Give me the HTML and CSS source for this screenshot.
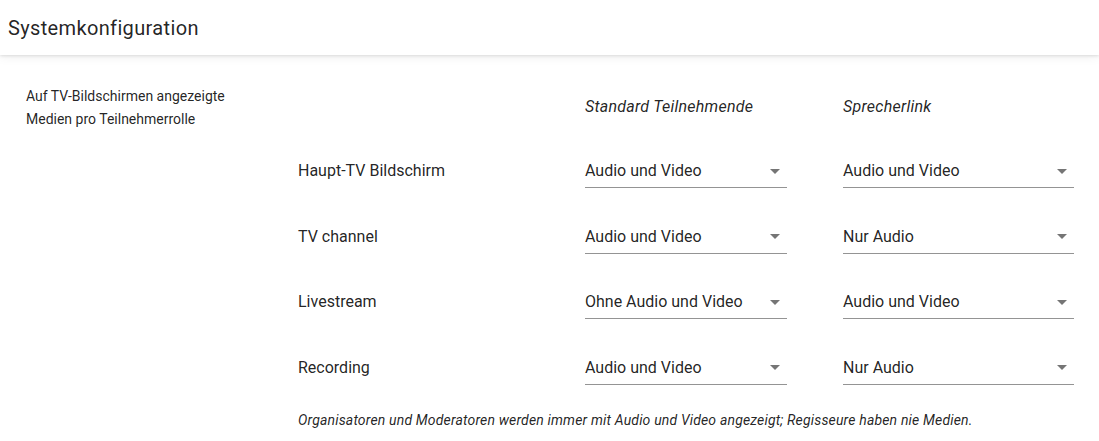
FILE: index.html
```html
<!DOCTYPE html>
<html>
<head>
  <meta charset="utf-8">
  <link rel="stylesheet" href="styles.css">
</head>
<body>
  <div class="toolbar">
    <h1>Systemkonfiguration</h1>
  </div>

  <div class="content">
    <div class="section-label">
      Auf TV-Bildschirmen angezeigte<br>Medien pro Teilnehmerrolle
    </div>

    <div class="media-grid">
      <div class="col-head"></div>
      <div class="col-head">Standard Teilnehmende</div>
      <div class="col-head">Sprecherlink</div>

      <div class="row-label">Haupt-TV Bildschirm</div>
      <div class="select narrow"><span>Audio und Video</span><i class="arrow"></i></div>
      <div class="select wide"><span>Audio und Video</span><i class="arrow"></i></div>

      <div class="row-label">TV channel</div>
      <div class="select narrow"><span>Audio und Video</span><i class="arrow"></i></div>
      <div class="select wide"><span>Nur Audio</span><i class="arrow"></i></div>

      <div class="row-label">Livestream</div>
      <div class="select narrow"><span>Ohne Audio und Video</span><i class="arrow"></i></div>
      <div class="select wide"><span>Audio und Video</span><i class="arrow"></i></div>

      <div class="row-label">Recording</div>
      <div class="select narrow"><span>Audio und Video</span><i class="arrow"></i></div>
      <div class="select wide"><span>Nur Audio</span><i class="arrow"></i></div>

      <div class="note">Organisatoren und Moderatoren werden immer mit Audio und Video angezeigt; Regisseure haben nie Medien.</div>
    </div>
  </div>
</body>
</html>
```

FILE: styles.css
```css
body {
  margin: 0;
  font-family: Roboto, "Noto Sans", sans-serif;
  color: rgba(0, 0, 0, 0.87);
  background: #ffffff;
}

.toolbar {
  height: 55px;
  display: flex;
  align-items: center;
  padding: 0 8px;
  background: #ffffff;
  box-shadow: 0 1px 3px rgba(0, 0, 0, 0.12), 0 3px 10px rgba(0, 0, 0, 0.05);
  position: relative;
}

h1 {
  margin: 0;
  font-size: 20px;
  font-weight: 400;
  letter-spacing: 0.35px;
  color: rgba(0, 0, 0, 0.87);
}

.content {
  display: flex;
  padding: 29.5px 0 0 26px;
}

.section-label {
  width: 272px;
  flex-shrink: 0;
  font-size: 14px;
  line-height: 23px;
}

.media-grid {
  display: grid;
  grid-template-columns: 287px 258px 231px;
  grid-template-rows: 38px repeat(4, 34px) auto;
  row-gap: 31.5px;
  align-items: center;
}

.col-head {
  align-self: start;
  padding-top: 12px;
  line-height: 20px;
  font-size: 16px;
  font-style: italic;
  letter-spacing: 0.25px;
}

.row-label {
  font-size: 16px;
  line-height: 20px;
}

.select {
  display: flex;
  align-items: center;
  justify-content: space-between;
  padding: 7px 0 6px;
  line-height: 20px;
  font-size: 16px;
  border-bottom: 1px solid rgba(0, 0, 0, 0.42);
}

.select.narrow {
  width: 202px;
}

.select.wide {
  width: 231px;
}

.arrow {
  width: 0;
  height: 0;
  margin-right: 7px;
  margin-top: 0;
  border-left: 5px solid transparent;
  border-right: 5px solid transparent;
  border-top: 5px solid rgba(0, 0, 0, 0.54);
}

.note {
  grid-column: 1 / 4;
  margin-top: -6px;
  font-size: 14px;
  line-height: 20px;
  font-style: italic;
  letter-spacing: 0.17px;
}
```
